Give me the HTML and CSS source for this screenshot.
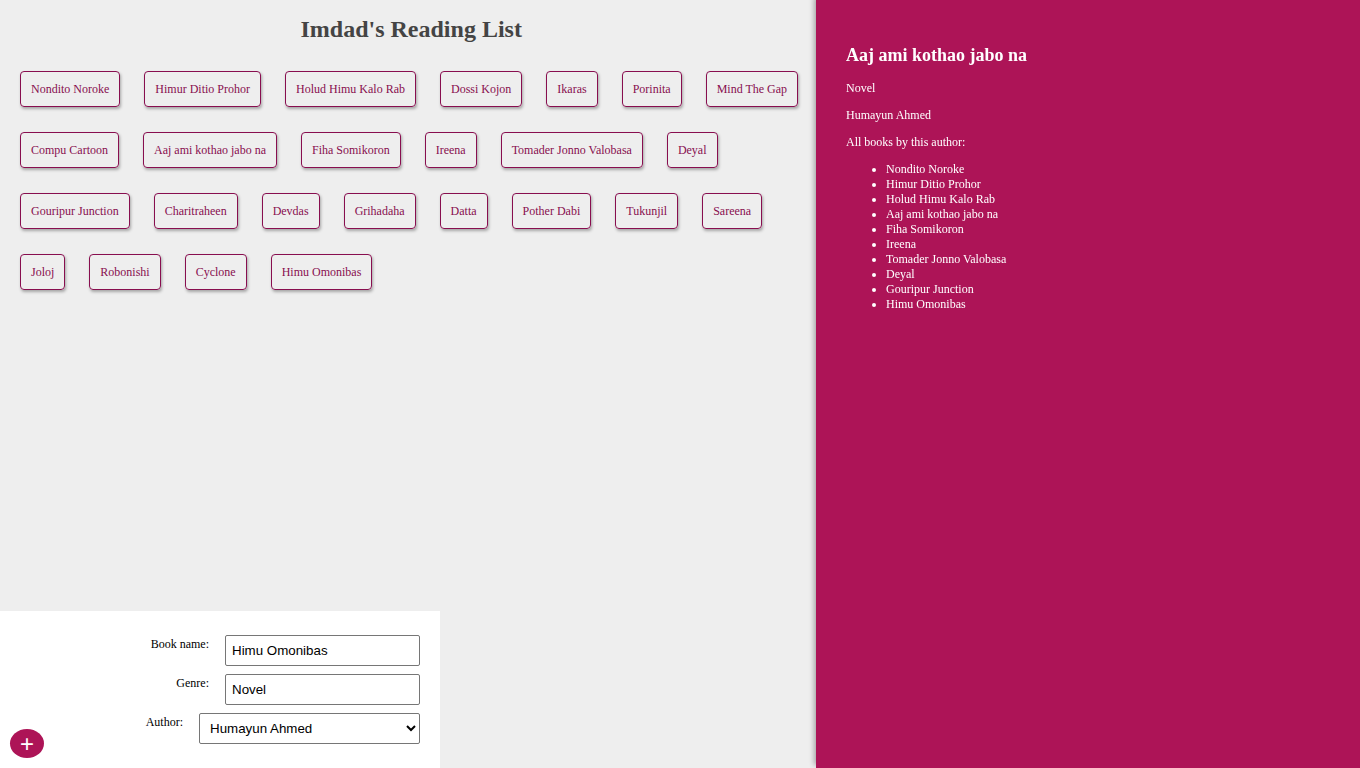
FILE: index.html
```html
<!DOCTYPE html>
<html>
<head>
<meta charset="utf-8">
<title>Imdad's Reading List</title>
<link rel="stylesheet" href="styles.css">
</head>
<body>
<div id="main">
  <h1>Imdad's Reading List</h1>
  <ul id="book-list"><li>Nondito Noroke</li><li>Himur Ditio Prohor</li><li>Holud Himu Kalo Rab</li><li>Dossi Kojon</li><li>Ikaras</li><li>Porinita</li><li>Mind The Gap</li><li>Compu Cartoon</li><li>Aaj ami kothao jabo na</li><li>Fiha Somikoron</li><li>Ireena</li><li>Tomader Jonno Valobasa</li><li>Deyal</li><li>Gouripur Junction</li><li>Charitraheen</li><li>Devdas</li><li>Grihadaha</li><li>Datta</li><li>Pother Dabi</li><li>Tukunjil</li><li>Sareena</li><li>Joloj</li><li>Robonishi</li><li>Cyclone</li><li>Himu Omonibas</li></ul>
  <div id="book-details">
    <div>
      <h2>Aaj ami kothao jabo na</h2>
      <p>Novel</p>
      <p>Humayun Ahmed</p>
      <p>All books by this author:</p>
      <ul class="other-books">
        <li>Nondito Noroke</li>
        <li>Himur Ditio Prohor</li>
        <li>Holud Himu Kalo Rab</li>
        <li>Aaj ami kothao jabo na</li>
        <li>Fiha Somikoron</li>
        <li>Ireena</li>
        <li>Tomader Jonno Valobasa</li>
        <li>Deyal</li>
        <li>Gouripur Junction</li>
        <li>Himu Omonibas</li>
      </ul>
    </div>
  </div>
  <form id="add-book">
    <div class="field">
      <label>Book name:</label>
      <input type="text" value="Himu Omonibas">
    </div>
    <div class="field">
      <label>Genre:</label>
      <input type="text" value="Novel">
    </div>
    <div class="field field-author">
      <label>Author:</label>
      <select>
        <option>Humayun Ahmed</option>
        <option>Sarat Chandra</option>
        <option>Muhammed Zafar Iqbal</option>
      </select>
    </div>
    <button type="button">+</button>
  </form>
</div>
</body>
</html>
```

FILE: styles.css
```css
body {
  background: #eee;
  font-family: "Liberation Serif", "Times New Roman", serif;
  font-size: 12px;
  margin: 0 8px;
}

#main {
  padding: 0;
  box-sizing: border-box;
  width: 60%;
  height: 100%;
}

h1 {
  color: #444;
  text-align: center;
  font-size: 24px;
  margin: 16px 0;
}

#book-list {
  padding: 0;
  margin: 12px 0;
  list-style: none;
}

#book-list li {
  display: inline-block;
  margin: 12px 12px 13px;
  padding: 10px;
  line-height: 14px;
  border-radius: 4px;
  border: 1px solid #880E4F;
  box-shadow: 1px 2px 3px rgba(0, 0, 0, 0.3);
  cursor: pointer;
  color: #880E4F;
}

form {
  background: #fff;
  padding: 20px;
  position: fixed;
  left: 0;
  bottom: 0;
  width: 400px;
}

form .field {
  display: grid;
  grid-template-columns: 1fr 1fr;
  column-gap: 10px;
}

form .field-author {
  grid-template-columns: 1fr 221px;
}

form label {
  text-align: right;
  padding: 6px;
  line-height: 14px;
}

form input,
form select {
  margin: 4px 0;
  padding: 6px;
  box-sizing: border-box;
  font-family: "Liberation Sans", Arial, sans-serif;
  font-size: 13.33px;
  height: 31px;
  border: 1px solid #767676;
  border-radius: 2px;
  background: #fff;
  color: #000;
}

form select {
  padding: 5px 6px;
}

form button {
  color: #fff;
  font-family: "Liberation Sans", Arial, sans-serif;
  font-size: 24px;
  line-height: 29px;
  height: 29px;
  width: 34px;
  background: #AD1457;
  border: 0;
  padding: 0;
  border-radius: 50%;
  cursor: pointer;
  position: absolute;
  bottom: 10px;
  left: 10px;
}

#book-details {
  position: fixed;
  top: 0;
  right: 0;
  width: 40%;
  height: 100%;
  background: #AD1457;
  padding: 30px;
  overflow: auto;
  box-shadow: -2px -3px 5px rgba(0, 0, 0, 0.3);
  box-sizing: border-box;
  color: #fff;
}

#book-details h2 {
  font-size: 18px;
  line-height: 21px;
  margin: 15px 0;
}

#book-details p {
  margin: 12px 0;
  line-height: 15px;
}

#book-details .other-books {
  margin: 12px 0;
  padding-left: 40px;
}

#book-details .other-books li {
  line-height: 15px;
}
```
